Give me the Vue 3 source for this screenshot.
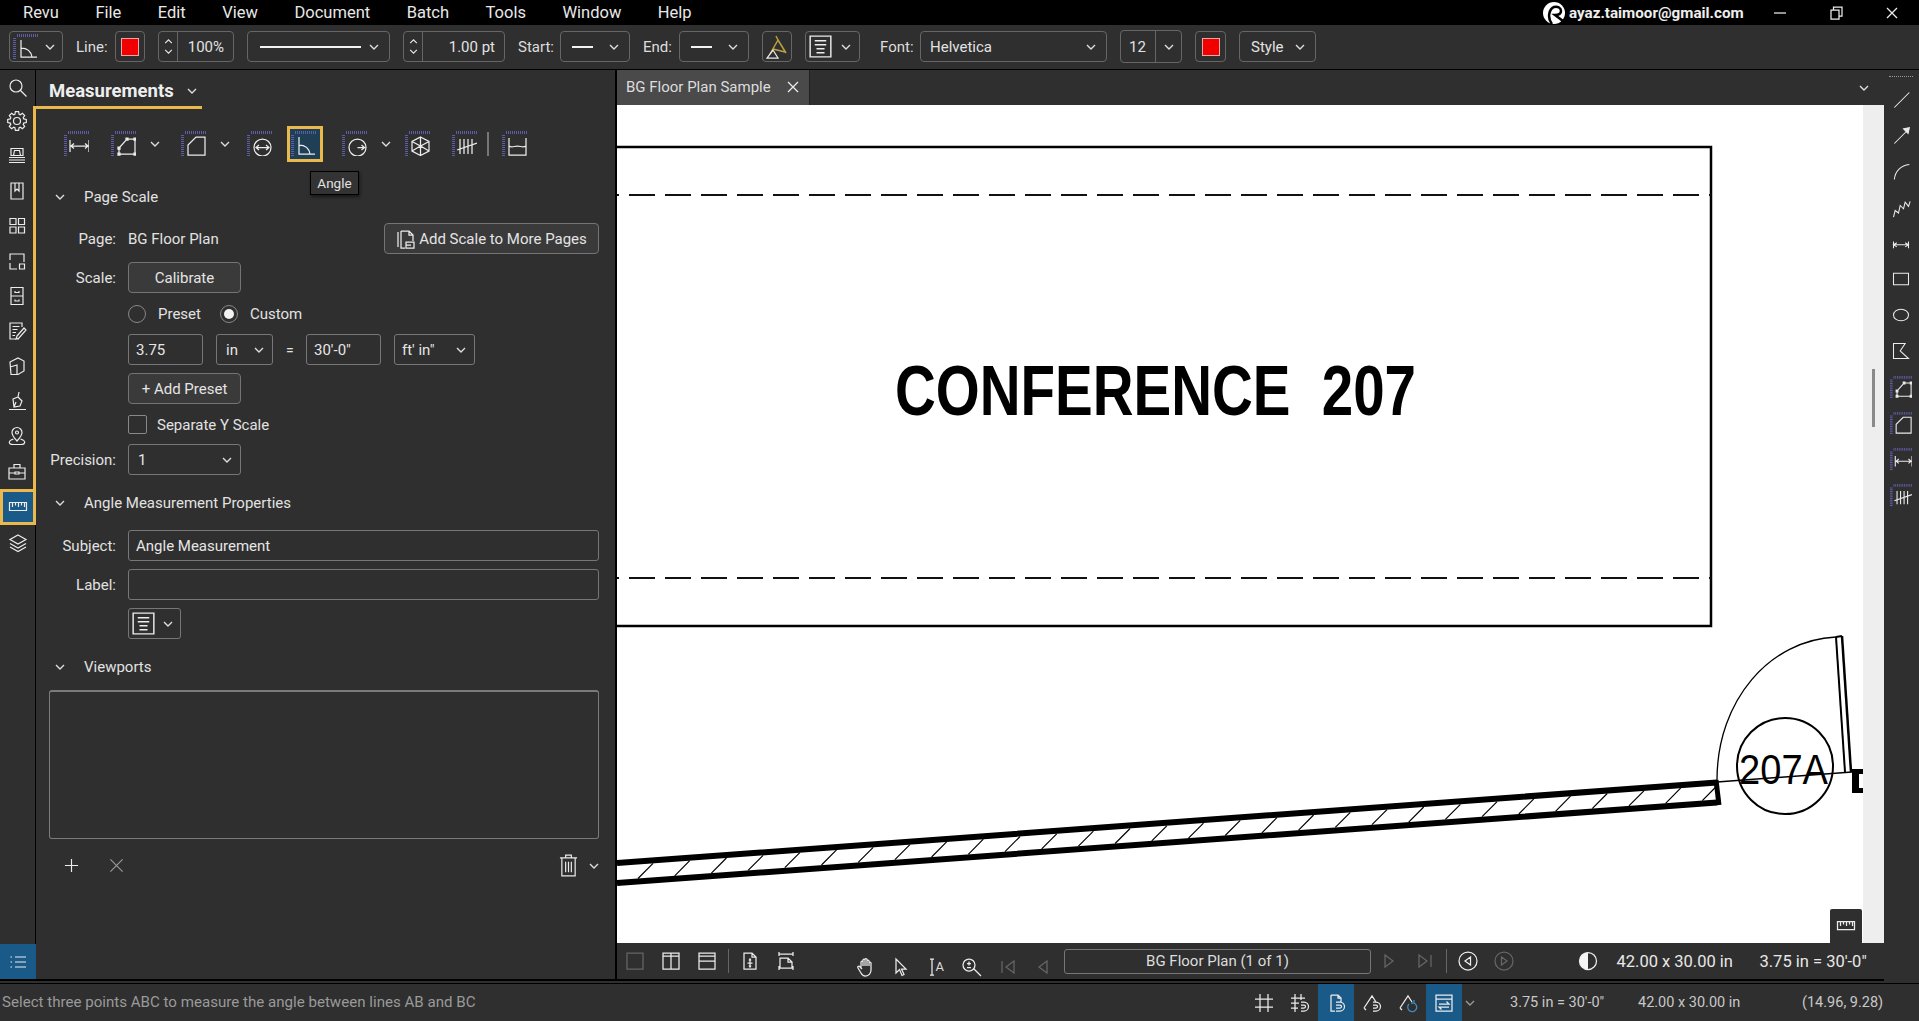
<script setup>
const menus = ['Revu', 'File', 'Edit', 'View', 'Document', 'Batch', 'Tools', 'Window', 'Help']

// gear outline for the rail
const gearPath = () => {
  const pts = []
  for (let i = 0; i < 8; i++) {
    const a = (i * Math.PI) / 4
    for (const [r, o] of [[7, -0.3], [9.4, -0.17], [9.4, 0.17], [7, 0.3]]) {
      pts.push(`${(10 + r * Math.cos(a + o)).toFixed(1)} ${(10 + r * Math.sin(a + o)).toFixed(1)}`)
    }
  }
  return `M${pts.join('L')}Z M13.5 10a3.5 3.5 0 1 1-7 0a3.5 3.5 0 1 1 7 0`
}

const railIcons = [
  gearPath(),
  'M4 2.5h12v7H4z M6.5 9.5l1-5h5l1 5 M2 11.5h16 M2 14h16 M2 16.5h16',
  'M4 2h12v16H4z M8 2v8l2-2 2 2V2',
  'M3 2.5h6v6H3z M11.5 2.5h6v6h-6z M3 11h6v6H3z M11.5 11h6v6h-6z',
  'M3 9V3h14v8 M3 12v6h7 M12.5 13h5v5h-5z M3 3v6',
  'M4 1.5h12v17H4z M4 10h12 M8 5v1.5h4V5 M8 13.5V15h4v-1.5',
  'M15 6V2H3v16h9 M5.5 5.5h7 M5.5 8.5h5 M5.5 11.5h3.5 M5.5 14.5h2.5 M10 15l7-8 2 2-7 8-3 1z',
  'M3 6l8-4 6 3v10l-6 3.5H4z M3 11l7-2v9',
  'M2 18.5h17 M12 1l-1 5 M6 8l5-2 4 4-2 5-6 1z M9 11l-2 5',
  'M10 1.5a5 5 0 0 1 5 5c0 3-5 8.5-5 8.5S5 9.5 5 6.5a5 5 0 0 1 5-5z M11.5 6.5a1.5 1.5 0 1 1-3 0a1.5 1.5 0 1 1 3 0 M6.5 13c-6 2-5 5.5-.5 5.5h8c4.5 0 5.5-3.5-.5-5.5',
  'M2 7h16v11H2z M7 7V3.5h6V7 M2 12h6 M12 12h6 M8 11h4v2H8z',
]
const rulerD = 'M1.5 5.5h17v8h-17z M4.5 5.5v4.5 M7.5 5.5v3 M10.5 5.5v4.5 M13.5 5.5v3 M16.5 5.5v4.5'

// the dotted corner shared by all measurement tools
const mRuler = 'M4 1.5H25 M1.5 4V25'
const mLength = 'M6 9v12 M25 9v12 M6 15h19 M10 12.5l-3 2.5 3 2.5 M21 12.5l3 2.5-3 2.5'
const mPoly = 'M8 23v-6l8-9h8v15z M7 22h2v2H7z M7 16h2v2H7z M15 7h2v2h-2z M23 7h2v2h-2z M23 22h2v2h-2z'
const mArea = 'M7 24v-10l8-8h9v18z'
const mCircle = 'M24 16.5a8.5 8.5 0 1 1-17 0a8.5 8.5 0 1 1 17 0 M9 16.5h13 M12 14l-3 2.5 3 2.5 M19 14l3 2.5-3 2.5'
const mAngle = 'M8 6v17h16 M8 14c6 0 10 3 11 9'
const mRadius = 'M24 16.5a8.5 8.5 0 1 1-17 0a8.5 8.5 0 1 1 17 0 M15.5 16.5h7 M19.5 14l3 2.5-3 2.5'
const mVolume = 'M15.5 6l8.5 4.5v9.5l-8.5 4.5-8.5-4.5v-9.5z M7 10.5l8.5 4.5 8.5-4.5 M15.5 15v9.5 M7 20l8.5-5 8.5 5 M15.5 6v9'
const mCount = 'M8 8v15 M12 8v15 M16 8v15 M20 8v15 M5 19l20-7'
const mCut = 'M7 7v17h17V7 M7 15c3 2 5 0 8.5 0s5 2 8.5 0'

const tools = [
  { d: mLength },
  { d: mPoly, chev: true },
  { d: mArea, chev: true },
  { d: mCircle },
  { d: mAngle, on: true },
  { d: mRadius, chev: true },
  { d: mVolume },
  { d: mCount },
  { sep: true },
  { d: mCut },
]

const rightTools = [
  { d: 'M4 21L22 3' },
  { d: 'M4 21L19 6 M22 2l-1.5 7-5.5-5.5z', fill: true },
  { d: 'M4 21C5 11 12 4 22 3' },
  { d: 'M3 23l2-8 4 3 2-9 4 4 2-8 4 5 2-6' },
  { d: 'M3 13h18 M3 9v8 M21 9v8 M7 10.5L3 13l4 2.5 M17 10.5l4 2.5-4 2.5' },
  { d: 'M3 5h18v14H3z' },
  { d: 'M21 12c0 4-4 7-9 7s-9-3-9-7 4-7 9-7 9 3 9 7z' },
  { d: 'M3 3h14l-6 9 10 9H3z' },
  { m: true, d: mPoly },
  { m: true, d: mArea },
  { m: true, d: mLength },
  { m: true, d: mCount },
]

const navA = [
  { d: 'M2 2h16v16H2z', dim: true },
  { d: 'M2 2h16v16H2z M10 2v16 M2 5h16' },
  { d: 'M2 2h16v16H2z M2 10h16 M2 5h16' },
]
const navB = [
  'M4 2h8l4 4v12H4z M12 2v4h4 M10 8v8 M7.5 12h5 M9 9.5l1-1.5 1 1.5 M9 14.5l1 1.5 1-1.5',
  'M3 3h14 M3 1v4 M17 1v4 M4 17V7h8l4 4v6 M12 7v4h4 M3 17h14 M3 15v4 M17 15v4',
]
const navC = [
  'M5 11V5a1 1 0 0 1 2 0v4 M7 9V3a1 1 0 0 1 2 0v6 M9 9V2.5a1 1 0 0 1 2 0V9 M11 9V4a1 1 0 0 1 2 0v5 M13 9V6a1 1 0 0 1 2 0v7c0 3-2 6-5.5 6-2 0-3.5-1-4.5-3l-3-5c-1-1.5 1-2.5 2-1l2 2',
  'M5 2v14l3.5-3.5 2.5 6 2-1-2.5-5.5H15z',
  'M3 2h4 M3 18h4 M5 2v16',
  'M13 8a6 6 0 1 1-12 0a6 6 0 1 1 12 0 M12 12l7 7 M7 4.5v4 M5 6.5h4 M5 10.5h4',
]
const navPrevs = [
  { d: 'M4 4v12 M16 4L8 10l8 6z' },
  { d: 'M14 4L6 10l8 6z' },
]
const navNexts = [
  { d: 'M6 4l8 6-8 6z' },
  { d: 'M16 4v12 M4 4l8 6-8 6z' },
]

const statusIcons = [
  { d: 'M6 1v18 M14 1v18 M1 6h18 M1 14h18' },
  { d: 'M5 1v18 M11 1v6 M1 5h14 M1 10h8 M1 15h7 M11 9h3a4.5 4.5 0 0 1 0 9h-3 M11 12h3a1.5 1.5 0 0 1 0 3h-3' },
  { d: 'M5 2h7l3 3v4 M5 2v16h4 M12 2v3h3 M10 9h4a4.5 4.5 0 0 1 0 9h-4 M10 12h4a1.5 1.5 0 0 1 0 3h-4', on: true },
  { d: 'M2 15L10 3l4 6 M2 15l2 2 M11 9h3a4.5 4.5 0 0 1 0 9h-3 M11 12h3a1.5 1.5 0 0 1 0 3h-3' },
  { d: 'M2 15L10 3l4 6 M2 15l2 2', blue: 'M11 11a4.5 4.5 0 1 0 5-1 M16 7v3h-3' },
  { d: 'M2 2h16v16H2z M2 6h16 M5 11h10l-2.5-2.5 M15 14H5l2.5 2.5', on: true },
]

// wall hatching of the floor plan
const wallY = (x, y0) => y0 - ((x - 617) * 80.5) / 1100
const hatch = (() => {
  let d = ''
  for (let x = 638; x < 1710; x += 36.7) {
    d += `M${x.toFixed(1)} ${wallY(x, 880).toFixed(1)}L${(x + 15).toFixed(1)} ${wallY(x + 15, 866).toFixed(1)}`
  }
  return d
})()
</script>

<template>
  <div class="app">
    <!-- menu -->
    <header class="menubar">
      <nav class="menus">
        <span v-for="m in menus" :key="m">{{ m }}</span>
      </nav>
      <div class="account">
        <svg class="logo" viewBox="0 0 22 22">
          <circle cx="11" cy="11" r="11" fill="#fff" stroke="none" />
          <path d="M9 22C4 16 6 7 11 5c4-1 7 1 7 4s-3 4-6 4l8 6" fill="none" stroke="#000" stroke-width="2.5" />
        </svg>
        <span class="mail">ayaz.taimoor@gmail.com</span>
      </div>
      <div class="winbtns">
        <svg viewBox="0 0 14 14"><path d="M1 7h12" /></svg>
        <svg viewBox="0 0 14 14"><path d="M2 4h8v9H2z M4.5 4V1H13v9h-3" /></svg>
        <svg viewBox="0 0 14 14"><path d="M2 2l10 10 M12 2L2 12" /></svg>
      </div>
    </header>

    <!-- properties toolbar -->
    <div class="toolbar">
      <div class="ctl tool-btn">
        <svg class="m-icon" viewBox="0 0 25 25">
          <path class="ruler" :d="mRuler" /><path :d="mAngle" />
        </svg>
        <svg class="chev" viewBox="0 0 10 6"><path d="M1 1l4 4 4-4" /></svg>
      </div>
      <div class="pair">
        <span class="lbl line-lbl">Line:</span>
        <div class="ctl color-btn"><i class="swatch"></i></div>
      </div>
      <div class="ctl spin pct">
        <div class="arrows">
          <svg viewBox="0 0 10 6"><path d="M1 5l4-4 4 4" /></svg>
          <svg viewBox="0 0 10 6"><path d="M1 1l4 4 4-4" /></svg>
        </div>
        <span>100%</span>
      </div>
      <div class="ctl select line-style">
        <i class="stroke"></i>
        <svg class="chev" viewBox="0 0 10 6"><path d="M1 1l4 4 4-4" /></svg>
      </div>
      <div class="ctl spin weight">
        <div class="arrows">
          <svg viewBox="0 0 10 6"><path d="M1 5l4-4 4 4" /></svg>
          <svg viewBox="0 0 10 6"><path d="M1 1l4 4 4-4" /></svg>
        </div>
        <span>1.00 pt</span>
      </div>
      <div class="pair">
        <span class="lbl start-lbl">Start:</span>
        <div class="ctl select end-sel">
          <i class="stroke short"></i>
          <svg class="chev" viewBox="0 0 10 6"><path d="M1 1l4 4 4-4" /></svg>
        </div>
      </div>
      <div class="pair">
        <span class="lbl end-lbl">End:</span>
        <div class="ctl select end-sel">
          <i class="stroke short"></i>
          <svg class="chev" viewBox="0 0 10 6"><path d="M1 1l4 4 4-4" /></svg>
        </div>
      </div>
      <div class="ctl color-btn">
        <svg class="caption-ic" viewBox="0 0 24 24">
          <path class="gold" d="M11 1l2 4-8 14 M13 5l8 13 M8 14l12 3" />
          <path d="M2 23l6-8 5 8z" />
        </svg>
      </div>
      <div class="ctl select fmt-sel">
        <svg class="fmt-ic" viewBox="0 0 20 20"><path d="M1 1h18v18H1z M5 5h10 M5 8.5h10 M6.5 12h7 M6.5 15.5h7" /></svg>
        <svg class="chev" viewBox="0 0 10 6"><path d="M1 1l4 4 4-4" /></svg>
      </div>
      <div class="pair font-pair">
        <span class="lbl font-lbl">Font:</span>
        <div class="ctl select font-sel">
          <span>Helvetica</span>
          <svg class="chev" viewBox="0 0 10 6"><path d="M1 1l4 4 4-4" /></svg>
        </div>
      </div>
      <div class="ctl combo">
        <span>12</span>
        <div class="combo-arrow"><svg class="chev" viewBox="0 0 10 6"><path d="M1 1l4 4 4-4" /></svg></div>
      </div>
      <div class="ctl color-btn wide"><i class="swatch"></i></div>
      <div class="ctl select style-sel">
        <span>Style</span>
        <svg class="chev" viewBox="0 0 10 6"><path d="M1 1l4 4 4-4" /></svg>
      </div>
    </div>

    <main class="main">
      <!-- left rail -->
      <aside class="rail">
        <div class="rail-top">
          <svg class="rail-ic" viewBox="0 0 20 20"><path d="M14 8a6 6 0 1 1-12 0a6 6 0 1 1 12 0 M12.5 12.5L18.5 18.5" /></svg>
        </div>
        <div class="rail-group">
          <div v-for="(d, i) in railIcons" :key="i" class="rail-item">
            <svg class="rail-ic" viewBox="0 0 20 20"><path :d="d" /></svg>
          </div>
        </div>
        <div class="rail-active">
          <svg class="rail-ic" viewBox="0 0 20 20"><path :d="rulerD" /></svg>
        </div>
        <div class="rail-item plain">
          <svg class="rail-ic" viewBox="0 0 20 20"><path d="M10 2l8 4.5-8 4.5-8-4.5z M2 10.5l8 4.5 8-4.5 M2 14l8 4.5 8-4.5" /></svg>
        </div>
        <div class="rail-fill"></div>
        <div class="rail-list">
          <svg class="rail-ic" viewBox="0 0 20 20"><path d="M7 5h11 M7 10h11 M7 15h11 M2.5 5h1.5 M2.5 10h1.5 M2.5 15h1.5" /></svg>
        </div>
      </aside>

      <!-- measurements panel -->
      <section class="panel">
        <div class="panel-title">
          <span>Measurements</span>
          <svg class="chev" viewBox="0 0 10 6"><path d="M1 1l4 4 4-4" /></svg>
        </div>

        <div class="tools">
          <div v-for="(t, i) in tools" :key="i" class="tool-cell">
            <i v-if="t.sep" class="tool-sep"></i>
            <template v-else>
              <div class="tool" :class="{ selected: t.on }">
                <svg class="m-icon" viewBox="0 0 25 25">
                  <path class="ruler" :d="mRuler" /><path :d="t.d" />
                </svg>
              </div>
              <svg v-if="t.chev" class="chev" viewBox="0 0 10 6"><path d="M1 1l4 4 4-4" /></svg>
            </template>
          </div>
          <div class="tooltip">Angle</div>
        </div>

        <div class="sec first">
          <svg class="chev" viewBox="0 0 10 6"><path d="M1 1l4 4 4-4" /></svg>
          <span>Page Scale</span>
        </div>
        <div class="row page-row">
          <label>Page:</label>
          <div class="page-val">
            <span>BG Floor Plan</span>
            <div class="btn add-scale">
              <svg class="addscale-ic" viewBox="0 0 20 20"><path d="M2 3v15 M5 2v17h4 M5 2h8l4 4v6 M13 2v4h4 M10 13h8v6h-8z M10 16h5" /></svg>
              Add Scale to More Pages
            </div>
          </div>
        </div>
        <div class="row">
          <label>Scale:</label>
          <div class="btn w113">Calibrate</div>
        </div>
        <div class="row radios">
          <div></div>
          <div class="radio-line">
            <i class="radio"></i><span class="r-preset">Preset</span>
            <i class="radio on"></i><span>Custom</span>
          </div>
        </div>
        <div class="row scale-row">
          <div></div>
          <div class="scale-line">
            <div class="field w75">3.75</div>
            <div class="field w57 between">in <svg class="chev" viewBox="0 0 10 6"><path d="M1 1l4 4 4-4" /></svg></div>
            <span class="eq">=</span>
            <div class="field w75">30'-0"</div>
            <div class="field w81 between unit">ft' in" <svg class="chev" viewBox="0 0 10 6"><path d="M1 1l4 4 4-4" /></svg></div>
          </div>
        </div>
        <div class="row">
          <div></div>
          <div class="btn w113">+ Add Preset</div>
        </div>
        <div class="row check-row short">
          <div></div>
          <div class="check-line"><i class="check"></i><span>Separate Y Scale</span></div>
        </div>
        <div class="row check-row precision">
          <label>Precision:</label>
          <div class="field w113 between">1 <svg class="chev" viewBox="0 0 10 6"><path d="M1 1l4 4 4-4" /></svg></div>
        </div>

        <div class="sec">
          <svg class="chev" viewBox="0 0 10 6"><path d="M1 1l4 4 4-4" /></svg>
          <span>Angle Measurement Properties</span>
        </div>
        <div class="row tight">
          <label>Subject:</label>
          <div class="field">Angle Measurement</div>
        </div>
        <div class="row">
          <label>Label:</label>
          <div class="field"></div>
        </div>
        <div class="row">
          <div></div>
          <div class="field w53 fmt-field">
            <svg class="fmt-ic" viewBox="0 0 20 20"><path d="M1 1h18v18H1z M5 5h10 M5 8.5h10 M6.5 12h7 M6.5 15.5h7" /></svg>
            <svg class="chev" viewBox="0 0 10 6"><path d="M1 1l4 4 4-4" /></svg>
          </div>
        </div>

        <div class="sec">
          <svg class="chev" viewBox="0 0 10 6"><path d="M1 1l4 4 4-4" /></svg>
          <span>Viewports</span>
        </div>
        <div class="viewports"></div>
        <div class="vp-actions">
          <svg class="vp-ic" viewBox="0 0 16 16"><path d="M8 1v14 M1 8h14" /></svg>
          <svg class="vp-ic dim" viewBox="0 0 16 16"><path d="M1.5 1.5l13 13 M14.5 1.5l-13 13" /></svg>
          <div class="vp-spacer"></div>
          <svg class="trash" viewBox="0 0 20 26"><path d="M1 5h18 M7 5V2h6v3 M3 5v19h14V5 M7 9v11 M10 9v11 M13 9v11" /></svg>
          <svg class="chev" viewBox="0 0 10 6"><path d="M1 1l4 4 4-4" /></svg>
        </div>
      </section>

      <!-- document -->
      <section class="doc">
        <div class="tabs">
          <div class="tab">
            <span>BG Floor Plan Sample</span>
            <svg class="tab-x" viewBox="0 0 12 12"><path d="M1 1l10 10 M11 1L1 11" /></svg>
          </div>
          <svg class="chev tabs-chev" viewBox="0 0 10 6"><path d="M1 1l4 4 4-4" /></svg>
        </div>

        <div class="view">
          <div class="page">
            <svg class="plan" viewBox="617 105 1246 838">
              <path d="M617 147H1711V626H617" fill="none" stroke="#000" stroke-width="2.5" />
              <path d="M617 195H1711 M617 578H1711" fill="none" stroke="#111" stroke-width="2" stroke-dasharray="26 10" stroke-dashoffset="-12" />
              <text x="895" y="415" font-size="71" font-weight="700" textLength="521" lengthAdjust="spacingAndGlyphs">CONFERENCE&#160;&#160;207</text>

              <path d="M617 863L1717 782.5 M617 883L1717 802.5" fill="none" stroke="#000" stroke-width="6" />
              <path d="M1716 780l3 25" fill="none" stroke="#000" stroke-width="5" />
              <path :d="hatch" fill="none" stroke="#000" stroke-width="1.2" />

              <path d="M1717 782L1852 772" fill="none" stroke="#000" stroke-width="1.5" />
              <path d="M1717 780C1717 700 1770 640 1836 637" fill="none" stroke="#000" stroke-width="1.3" />
              <path d="M1836 637L1845 772" fill="none" stroke="#000" stroke-width="2" />
              <path d="M1842 636L1851 772" fill="none" stroke="#000" stroke-width="2.5" />
              <path d="M1836 637l6-1" fill="none" stroke="#000" stroke-width="2" />
              <path d="M1852 769h11v5h-4v14h4v5h-11z" fill="#000" />
              <circle cx="1785" cy="766" r="48" fill="none" stroke="#000" stroke-width="2" />
              <text x="1739" y="784" font-size="43" textLength="89" lengthAdjust="spacingAndGlyphs">207A</text>
            </svg>
            <div class="float-ruler">
              <svg viewBox="0 0 20 20"><path :d="rulerD" /></svg>
            </div>
          </div>
          <div class="track"><i class="thumb"></i></div>
        </div>

        <div class="navbar">
          <div v-for="(n, i) in navA" :key="i" class="nav-cell" :class="{ dim: n.dim }">
            <svg viewBox="0 0 20 20"><path :d="n.d" /></svg>
          </div>
          <i class="nav-sep"></i>
          <div v-for="(d, i) in navB" :key="i" class="nav-cell">
            <svg viewBox="0 0 20 20"><path :d="d" /></svg>
          </div>
          <div class="nav-gap"></div>
          <div v-for="(d, i) in navC" :key="i" class="nav-cell tight">
            <svg viewBox="0 0 20 20"><path :d="d" /></svg>
            <span v-if="i === 2" class="cursor-a">A</span>
          </div>
          <div v-for="(n, i) in navPrevs" :key="i" class="nav-cell tight dim">
            <svg viewBox="0 0 20 20"><path :d="n.d" /></svg>
          </div>
          <div class="page-field">BG Floor Plan (1 of 1)</div>
          <div v-for="(n, i) in navNexts" :key="i" class="nav-cell dim">
            <svg viewBox="0 0 20 20"><path :d="n.d" /></svg>
          </div>
          <i class="nav-sep"></i>
          <div class="nav-cell">
            <svg viewBox="0 0 20 20"><path d="M19 10a9 9 0 1 1-18 0a9 9 0 1 1 18 0 M12.5 6v8L7 10z" /></svg>
          </div>
          <div class="nav-cell dim">
            <svg viewBox="0 0 20 20"><path d="M19 10a9 9 0 1 1-18 0a9 9 0 1 1 18 0 M7.5 6v8l5.5-4z" /></svg>
          </div>
          <div class="nav-cell contrast">
            <svg viewBox="0 0 20 20">
              <circle cx="10" cy="10" r="8.5" />
              <path class="half" d="M10 1.5a8.5 8.5 0 0 0 0 17z" />
            </svg>
          </div>
          <span class="nav-size">42.00 x 30.00 in</span>
          <span class="nav-scale">3.75 in = 30'-0"</span>
        </div>
      </section>

      <!-- markup tools -->
      <aside class="rtools">
        <i class="grip"></i>
        <div v-for="(t, i) in rightTools" :key="i" class="rtool">
          <svg v-if="t.m" class="rt-m" viewBox="0 0 25 25">
            <path class="ruler" :d="mRuler" /><path :d="t.d" />
          </svg>
          <svg v-else viewBox="0 0 24 24"><path :d="t.d" :class="{ solid: t.fill }" /></svg>
        </div>
      </aside>
    </main>

    <div class="seam"></div>

    <footer class="status">
      <span class="status-msg">Select three points ABC to measure the angle between lines AB and BC</span>
      <div v-for="(s, i) in statusIcons" :key="i" class="st-cell" :class="{ on: s.on }">
        <svg viewBox="0 0 20 20">
          <path :d="s.d" />
          <path v-if="s.blue" class="blue" :d="s.blue" />
        </svg>
      </div>
      <svg class="chev st-chev" viewBox="0 0 10 6"><path d="M1 1l4 4 4-4" /></svg>
      <span class="st-a">3.75 in = 30'-0"</span>
      <span class="st-b">42.00 x 30.00 in</span>
      <span class="st-c">(14.96, 9.28)</span>
    </footer>
  </div>
</template>

<style scoped>
.app {
  width: 100%;
  height: 100vh;
  display: flex;
  flex-direction: column;
  overflow: hidden;
  background: #2f2f2f;
  color: #e2e2e2;
  font-family: Roboto, "Liberation Sans", sans-serif;
  font-size: 15px;
}

svg {
  display: block;
  fill: none;
  stroke: #ececec;
  stroke-width: 1.25;
  flex: none;
}
.chev {
  width: 10px;
  height: 6px;
  stroke-width: 1.4;
  stroke: #ddd;
}

/* menu */
.menubar {
  height: 25px;
  flex: none;
  background: #000;
  display: flex;
  align-items: center;
}
.menus {
  display: flex;
  gap: 36.5px;
  padding-left: 23px;
  font-size: 16.5px;
  color: #e8e8e8;
  flex: 1;
}
.account {
  display: flex;
  align-items: center;
  gap: 4px;
}
.logo {
  width: 22px;
  height: 22px;
}
.mail {
  font-weight: 700;
  font-size: 15.2px;
  width: 176px;
  color: #eee;
}
.winbtns {
  display: flex;
  width: 174px;
  box-sizing: border-box;
  padding-left: 28px;
  gap: 42px;
}
.winbtns svg {
  width: 14px;
  height: 14px;
}

/* toolbar */
.toolbar {
  height: 45px;
  flex: none;
  display: flex;
  align-items: center;
  gap: 13px;
  padding-left: 9px;
  padding-bottom: 1px;
  background: #2f2f2f;
  border-bottom: 1px solid #000;
  box-sizing: border-box;
}
.pair {
  display: flex;
  align-items: center;
}
.font-pair {
  margin-left: 7px;
}
.lbl {
  font-size: 15px;
  color: #ddd;
}
.line-lbl { width: 39px; }
.start-lbl { width: 42px; }
.end-lbl { width: 36px; }
.font-lbl { width: 40px; }
.ctl {
  height: 31px;
  box-sizing: border-box;
  border: 1px solid #666;
  border-radius: 4px;
  display: flex;
  align-items: center;
}
.tool-btn {
  width: 54px;
  justify-content: space-between;
  padding: 0 7px 0 3px;
}
.color-btn {
  width: 30px;
  justify-content: center;
}
.color-btn.wide {
  width: 31px;
}
.swatch {
  width: 18px;
  height: 18px;
  box-sizing: border-box;
  background: #f20000;
  border: 1px solid #e9a9a9;
}
.spin {
  padding: 0;
  overflow: hidden;
}
.pct { width: 76px; }
.weight { width: 102px; }
.arrows {
  width: 19px;
  height: 100%;
  border-right: 1px solid #666;
  display: flex;
  flex-direction: column;
  align-items: center;
  justify-content: space-around;
  padding: 4px 0;
  box-sizing: border-box;
  flex: none;
}
.arrows svg {
  width: 9px;
  height: 5px;
  stroke-width: 1.3;
}
.spin span {
  flex: 1;
  text-align: right;
  padding-right: 9px;
}
.select {
  justify-content: space-between;
  padding: 0 10px 0 8px;
}
.line-style {
  width: 143px;
  padding-left: 12px;
}
.stroke {
  display: block;
  width: 101px;
  height: 2px;
  background: #f2f2f2;
}
.stroke.short {
  width: 21px;
}
.end-sel {
  width: 70px;
  padding-left: 11px;
}
.caption-ic {
  width: 24px;
  height: 26px;
}
.gold {
  stroke: #b9a13e;
  stroke-width: 1.5;
}
.fmt-sel {
  width: 55px;
  padding: 0 8px 0 3px;
}
.fmt-ic {
  width: 23px;
  height: 23px;
}
.font-sel {
  width: 187px;
  padding-left: 9px;
}
.combo {
  width: 62px;
  height: 33px;
  padding-left: 8px;
}
.combo span {
  flex: 1;
}
.combo-arrow {
  width: 25px;
  height: 100%;
  border-left: 1px solid #666;
  display: flex;
  align-items: center;
  justify-content: center;
}
.style-sel {
  width: 77px;
  padding-left: 11px;
}

/* layout */
.main {
  flex: 1;
  min-height: 0;
  display: flex;
}
.rail,
.panel,
.doc {
  border-bottom: 2px solid #000;
}

/* rail */
.rail {
  width: 36px;
  flex: none;
  display: flex;
  flex-direction: column;
}
.rail-top {
  height: 36px;
  flex: none;
  box-sizing: border-box;
  border-right: 1px solid #000;
  display: flex;
  align-items: center;
  justify-content: center;
}
.rail-ic {
  width: 20px;
  height: 20px;
  stroke-width: 1.2;
}
.rail-group {
  border-right: 3px solid #eab84c;
  border-top: 3px solid #eab84c;
  height: 383px;
  box-sizing: border-box;
  flex: none;
  display: flex;
  flex-direction: column;
  margin-left: 33px;
  width: 3px;
  overflow: visible;
  position: relative;
}
.rail-item {
  height: 35px;
  width: 33px;
  margin-left: -33px;
  flex: none;
  display: flex;
  align-items: center;
  justify-content: center;
}
.rail-item:first-child {
  margin-top: -5.5px;
}
.rail-item.plain {
  width: 36px;
  margin-left: 0;
  margin-top: 0;
  box-sizing: border-box;
  border-right: 1px solid #000;
}
.rail-active {
  height: 36px;
  flex: none;
  box-sizing: border-box;
  background: #1a5a88;
  border: 3px solid #eab84c;
  display: flex;
  align-items: center;
  justify-content: center;
}
.rail-fill {
  flex: 1;
  border-right: 1px solid #000;
}
.rail-list {
  height: 35px;
  flex: none;
  background: #1a5a88;
  display: flex;
  align-items: center;
  justify-content: center;
}

/* panel */
.panel {
  width: 579px;
  flex: none;
  box-sizing: content-box;
  border-right: 2px solid #000;
  height: calc(100% - 2px);
  display: flex;
  flex-direction: column;
}
.panel-title {
  width: 166px;
  height: 39px;
  flex: none;
  box-sizing: border-box;
  border-bottom: 3px solid #eab84c;
  display: flex;
  align-items: center;
  gap: 13px;
  padding: 5px 0 0 13px;
  font-size: 18.5px;
  font-weight: 700;
  color: #eee;
}
.tools {
  position: relative;
  margin: 17px 0 0 23px;
  display: grid;
  grid-template-columns: 47px 70px 66px 44.5px 50.5px 63px 47px 36px 14px 36px;
  height: 36px;
  flex: none;
}
.tool-cell {
  display: flex;
  align-items: center;
  gap: 8px;
}
.tool {
  width: 36px;
  height: 36px;
  box-sizing: border-box;
  display: flex;
  align-items: center;
  justify-content: center;
  flex: none;
}
.tool.selected {
  border: 3px solid #eab84c;
  background: #1f3f57;
}
.m-icon {
  width: 25px;
  height: 25px;
}
.tool .m-icon {
  margin: -2px 0 0 -2px;
}
.ruler {
  stroke: #5d5da6;
  stroke-width: 3;
  stroke-dasharray: 1 1;
}
.tool-sep {
  display: block;
  width: 2px;
  height: 24px;
  background: #777;
  margin-left: 4px;
}
.tooltip {
  position: absolute;
  left: 251px;
  top: 45px;
  width: 49px;
  height: 24px;
  box-sizing: border-box;
  background: #333;
  border: 1px solid #000;
  box-shadow: 1px 2px 3px rgba(0, 0, 0, 0.5);
  display: flex;
  align-items: center;
  justify-content: center;
  font-size: 13.5px;
}

.sec {
  height: 30px;
  flex: none;
  margin-top: 13px;
  display: flex;
  align-items: center;
  gap: 19px;
  padding-left: 19px;
}
.sec.first {
  margin-top: 20px;
}
.row {
  display: grid;
  grid-template-columns: 80px 471px;
  column-gap: 12px;
  align-items: center;
  margin-top: 8px;
  flex: none;
  min-height: 30px;
}
.row label {
  text-align: right;
}
.page-row {
  margin-top: 11px;
}
.page-val {
  display: flex;
  align-items: center;
  justify-content: space-between;
}
.btn {
  height: 31px;
  box-sizing: border-box;
  border: 1px solid #747474;
  border-radius: 4px;
  background: #3a3a3a;
  display: flex;
  align-items: center;
  justify-content: center;
  color: #e4e4e4;
}
.w113 { width: 113px; }
.add-scale {
  width: 215px;
  gap: 3px;
}
.addscale-ic {
  width: 20px;
  height: 20px;
}
.radios {
  margin-top: 11px;
  min-height: 20px;
}
.radio-line {
  display: flex;
  align-items: center;
}
.radio {
  width: 18px;
  height: 18px;
  box-sizing: border-box;
  border: 1px solid #888;
  border-radius: 50%;
  margin-right: 12px;
  position: relative;
  flex: none;
}
.radio.on::after {
  content: "";
  position: absolute;
  inset: 3px;
  border-radius: 50%;
  background: #f2f2f2;
}
.r-preset {
  width: 62px;
}
.scale-row {
  margin-top: 10px;
}
.scale-line {
  display: flex;
  align-items: center;
  gap: 13px;
}
.field {
  height: 31px;
  box-sizing: border-box;
  border: 1px solid #777;
  border-radius: 3px;
  padding: 0 7px;
  display: flex;
  align-items: center;
  color: #e6e6e6;
}
.between {
  justify-content: space-between;
  padding-left: 9px;
  padding-right: 8px;
}
.unit {
  padding-left: 7px;
}
.w75 { width: 75px; }
.w57 { width: 57px; }
.w81 { width: 81px; }
.w53 { width: 53px; }
.eq {
  width: 7px;
  font-size: 14px;
}
.check-row {
  margin-top: 11px;
}
.check-row.precision {
  margin-top: 10px;
}
.check-row.short {
  min-height: 19px;
}
.check-line {
  display: flex;
  align-items: center;
  gap: 10px;
}
.check {
  width: 19px;
  height: 19px;
  box-sizing: border-box;
  border: 1px solid #888;
  border-radius: 2px;
}
.tight {
  margin-top: 12px;
}
.fmt-field {
  justify-content: space-between;
  padding: 0 7px 0 3px;
}
.viewports {
  margin: 8px 0 0 13px;
  width: 550px;
  height: 149px;
  flex: none;
  box-sizing: border-box;
  border: 1px solid #7b7b7b;
  border-top-width: 2px;
  border-radius: 3px;
}
.vp-actions {
  display: flex;
  align-items: center;
  margin-top: 14px;
  padding-left: 28px;
  width: 563px;
  box-sizing: border-box;
}
.vp-ic {
  width: 15px;
  height: 15px;
  margin-right: 30px;
}
.vp-ic.dim {
  stroke: #999;
}
.vp-spacer {
  flex: 1;
}
.trash {
  width: 19px;
  height: 25px;
  margin-right: 11px;
}

/* document */
.doc {
  flex: 1;
  min-width: 0;
  display: flex;
  flex-direction: column;
}
.tabs {
  height: 35px;
  flex: none;
  display: flex;
  align-items: center;
  background: #2f2f2f;
}
.tab {
  width: 193px;
  height: 100%;
  box-sizing: border-box;
  background: #4a4a4a;
  border-right: 1px solid #222;
  display: flex;
  align-items: center;
  justify-content: space-between;
  padding: 0 10px 2px 9px;
  font-size: 15px;
  color: #ddd;
}
.tab-x {
  width: 12px;
  height: 12px;
}
.tabs-chev {
  margin-left: 1049px;
}
.view {
  flex: 1;
  min-height: 0;
  display: flex;
}
.page {
  flex: 1;
  min-width: 0;
  background: #fff;
  position: relative;
  overflow: hidden;
}
.plan {
  width: 1246px;
  height: 838px;
  stroke: none;
  fill: #000;
}
.plan text {
  font-family: "Liberation Sans", Arial, sans-serif;
  fill: #000;
  stroke: none;
}
.float-ruler {
  position: absolute;
  right: 1px;
  bottom: 0;
  width: 32px;
  height: 34px;
  background: #2f2f2f;
  border-radius: 2px 2px 0 0;
  display: flex;
  align-items: center;
  justify-content: center;
}
.float-ruler svg {
  width: 20px;
  height: 20px;
}
.track {
  width: 21px;
  flex: none;
  background: #eeeeee;
  position: relative;
}
.thumb {
  position: absolute;
  left: 9px;
  top: 264px;
  width: 3px;
  height: 58px;
  background: #8a8a8a;
}
.navbar {
  height: 36px;
  flex: none;
  display: flex;
  align-items: center;
  background: #2f2f2f;
  font-size: 16.5px;
}
.nav-cell {
  width: 36px;
  height: 100%;
  flex: none;
  display: flex;
  align-items: center;
  justify-content: center;
  position: relative;
}
.nav-cell.tight {
  width: 35.5px;
}
.nav-cell svg {
  width: 20px;
  height: 20px;
}
.nav-cell.dim svg {
  stroke: #666;
}
.nav-sep {
  display: block;
  width: 1px;
  height: 24px;
  background: #666;
  margin: 0 2.5px 0 3px;
  flex: none;
}
.nav-gap {
  width: 44.5px;
  flex: none;
}
.cursor-a {
  position: absolute;
  left: 16.5px;
  top: 10px;
  font-size: 13px;
  color: #ddd;
}
.page-field {
  width: 307px;
  height: 25px;
  margin-left: 3px;
  flex: none;
  box-sizing: border-box;
  border: 1px solid #777;
  border-radius: 3px;
  display: flex;
  align-items: center;
  justify-content: center;
  padding-bottom: 1px;
  font-size: 15px;
  color: #ddd;
}
.contrast {
  margin-left: 48px;
}
.half {
  fill: #f4f4f4;
  stroke: none;
}
.nav-size {
  margin-left: 11px;
  width: 143px;
  color: #e8e8e8;
  flex: none;
}
.nav-scale {
  color: #e8e8e8;
  flex: none;
}

/* markup tools */
.rtools {
  width: 35px;
  flex: none;
  display: flex;
  flex-direction: column;
  align-items: center;
  background: #2f2f2f;
  padding-right: 2px;
  box-sizing: border-box;
}
.grip {
  display: block;
  width: 24px;
  margin-top: 6px;
  height: 5px;
  border-top: 1px dotted #999;
}
.rtool {
  height: 35.9px;
  flex: none;
  display: flex;
  align-items: center;
  justify-content: center;
}
.rtool svg {
  width: 20px;
  height: 20px;
}
.rtool .rt-m {
  width: 22px;
  height: 22px;
}
.solid {
  fill: #ececec;
}

/* status */
.seam {
  height: 3px;
  flex: none;
  box-sizing: border-box;
  border-bottom: 1px solid #000;
}
.status {
  height: 37px;
  flex: none;
  display: flex;
  align-items: center;
  background: #2f2f2f;
  font-size: 14.5px;
  color: #c8c8c8;
}
.status-msg {
  width: 1246px;
  flex: none;
  padding: 0 0 2px 2px;
  box-sizing: border-box;
  color: #9a9a9a;
  font-size: 15.1px;
}
.st-cell {
  width: 36px;
  height: 100%;
  flex: none;
  display: flex;
  align-items: center;
  justify-content: center;
}
.st-cell.on {
  background: #1a5a88;
}
.st-cell svg {
  width: 20px;
  height: 20px;
}
.blue {
  stroke: #3d8fc4;
}
.st-chev {
  margin-left: 3px;
  stroke: #999;
}
.st-a {
  margin-left: 35px;
  width: 128px;
  flex: none;
}
.st-b {
  width: 164px;
  flex: none;
}
.st-c {
  flex: none;
}
</style>

<style>
html,
body {
  margin: 0;
  background: #2f2f2f;
  overflow: hidden;
}
</style>
